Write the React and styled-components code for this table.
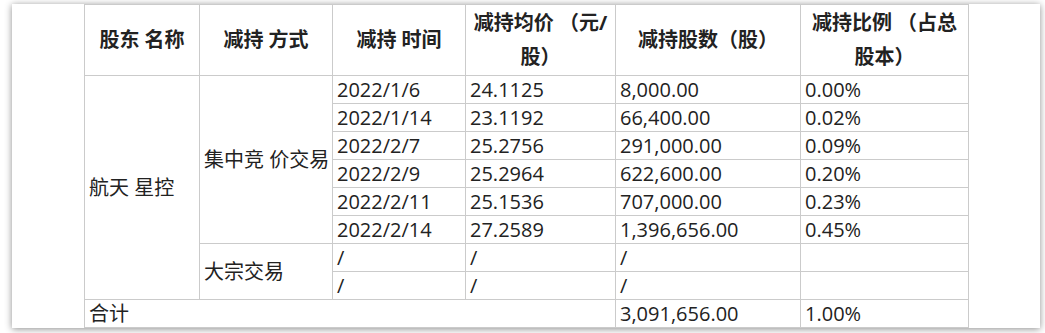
import React from "react";
import styled, { createGlobalStyle } from "styled-components";

const GlobalStyle = createGlobalStyle`
  body {
    margin: 0;
    background: #ffffff;
    font-family: "Open Sans", "Noto Sans CJK SC", sans-serif;
  }
`;

const Page = styled.div`
  padding: 4px 5px 5px 12px;
`;

const Card = styled.div`
  width: 1028px;
  height: 324px;
  box-sizing: border-box;
  background: #fff;
  box-shadow: 0 1px 7px rgba(0, 0, 0, 0.45);
  padding-left: 72px;
  overflow: hidden;
`;

const Table = styled.table`
  border-collapse: collapse;
  table-layout: fixed;
  width: 884px;
  color: #222;
  font-size: 20px;

  th,
  td {
    border: 1px solid #cbcbcb;
    padding: 0 4px;
    vertical-align: middle;
  }
`;

const HeadCell = styled.th`
  height: 70px;
  line-height: 34px;
  font-weight: 700;
  text-align: center;
`;

const Cell = styled.td`
  height: 27px;
  line-height: 27px;
  text-align: left;
  white-space: nowrap;
`;

const widths = [115, 133, 133, 150, 185, 168];

const trades = [
  ["2022/1/6", "24.1125", "8,000.00", "0.00%"],
  ["2022/1/14", "23.1192", "66,400.00", "0.02%"],
  ["2022/2/7", "25.2756", "291,000.00", "0.09%"],
  ["2022/2/9", "25.2964", "622,600.00", "0.20%"],
  ["2022/2/11", "25.1536", "707,000.00", "0.23%"],
  ["2022/2/14", "27.2589", "1,396,656.00", "0.45%"],
];

const App = () => {
  return (
    <Page>
      <GlobalStyle />
      <Card>
        <Table>
          <colgroup>
            {widths.map((w, i) => (
              <col key={i} style={{ width: w }} />
            ))}
          </colgroup>
          <thead>
            <tr>
              <HeadCell>股东 名称</HeadCell>
              <HeadCell>减持 方式</HeadCell>
              <HeadCell>减持 时间</HeadCell>
              <HeadCell>
                减持均价 （元/
                <br />
                股）
              </HeadCell>
              <HeadCell>减持股数（股）</HeadCell>
              <HeadCell>
                减持比例 （占总
                <br />
                股本）
              </HeadCell>
            </tr>
          </thead>
          <tbody>
            {trades.map((t, i) => (
              <tr key={t[0]}>
                {i === 0 && <Cell rowSpan={8}>航天 星控</Cell>}
                {i === 0 && <Cell rowSpan={6}>集中竞 价交易</Cell>}
                <Cell>{t[0]}</Cell>
                <Cell>{t[1]}</Cell>
                <Cell>{t[2]}</Cell>
                <Cell>{t[3]}</Cell>
              </tr>
            ))}
            <tr>
              <Cell rowSpan={2}>大宗交易</Cell>
              <Cell>/</Cell>
              <Cell>/</Cell>
              <Cell>/</Cell>
              <Cell />
            </tr>
            <tr>
              <Cell>/</Cell>
              <Cell>/</Cell>
              <Cell>/</Cell>
              <Cell />
            </tr>
            <tr>
              <Cell colSpan={4}>合计</Cell>
              <Cell>3,091,656.00</Cell>
              <Cell>1.00%</Cell>
            </tr>
          </tbody>
        </Table>
      </Card>
    </Page>
  );
};

export default App;
